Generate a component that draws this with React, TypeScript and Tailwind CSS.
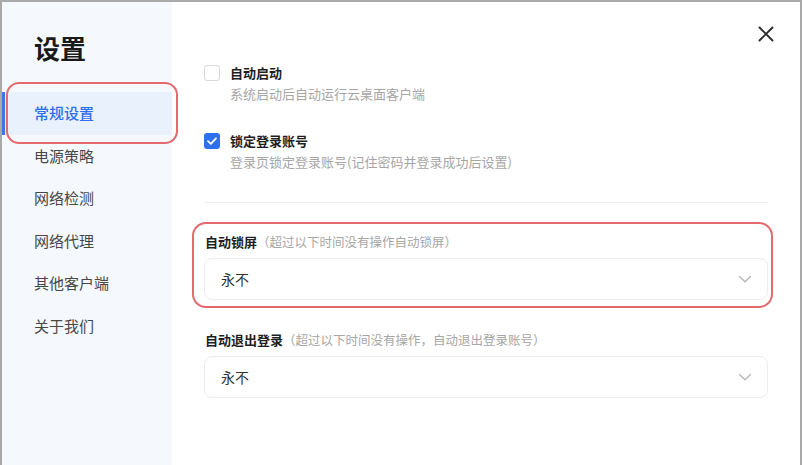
import React from "react";

const navItems = ["常规设置", "电源策略", "网络检测", "网络代理", "其他客户端", "关于我们"];

function Chevron() {
  return (
    <svg width="14" height="14" viewBox="0 0 14 14" fill="none">
      <path d="M1.5 4.5 L7 9.8 L12.5 4.5" stroke="#b5b5b5" strokeWidth="1.3" strokeLinecap="round" strokeLinejoin="round" />
    </svg>
  );
}

function Select({ value }: { value: string }) {
  return (
    <div className="mt-[6px] h-[42px] rounded-[8px] border border-[#ececec] bg-white flex items-center justify-between pl-4 pr-[15px]">
      <span className="text-[14px] leading-[20px] text-[#333333]">{value}</span>
      <Chevron />
    </div>
  );
}

function CheckRow({ checked, label, desc }: { checked: boolean; label: string; desc: string }) {
  return (
    <div className="flex gap-[10px]">
      <div className="pt-[2px]">
        {checked ? (
          <div className="w-4 h-4 rounded-[3px] bg-[#2f6fee] flex items-center justify-center">
            <svg width="10" height="8" viewBox="0 0 10 8" fill="none">
              <path d="M1 4.2 L3.8 6.8 L9 1.3" stroke="white" strokeWidth="1.8" strokeLinecap="round" strokeLinejoin="round" />
            </svg>
          </div>
        ) : (
          <div className="w-4 h-4 rounded-[3px] border border-[#d9d9d9] bg-white" />
        )}
      </div>
      <div className="flex flex-col gap-[1px]">
        <span className="text-[13px] leading-[20px] font-semibold text-[#1f1f1f]">{label}</span>
        <span className="text-[13px] leading-[20px] text-[#a6a6a6]">{desc}</span>
      </div>
    </div>
  );
}

export default function App() {
  return (
    <div className="relative flex w-[802px] h-[465px] border-x-2 border-t-2 border-[#a9a9a9] bg-white font-['Noto_Sans_CJK_SC',sans-serif] overflow-hidden">
      <aside className="w-[170px] shrink-0 bg-[#f5f9fd] flex flex-col">
        <h1 className="pl-8 pt-[28px] text-[26px] leading-[36px] font-bold text-[#1a1a1a]">设置</h1>
        <nav className="mt-[26px] flex flex-col">
          {navItems.map((item, i) => (
            <div
              key={item}
              className={
                i === 0
                  ? "relative h-[42.6px] flex items-center pl-8 bg-[#e9f1fd] text-[#2f6fee] text-[15px] font-medium"
                  : "relative h-[42.6px] flex items-center pl-8 text-[#474747] text-[15px]"
              }
            >
              {i === 0 && <span className="absolute left-0 top-0 bottom-0 w-[3px] bg-[#3a78ea]" />}
              {item}
            </div>
          ))}
        </nav>
      </aside>

      <main className="relative flex-1 flex flex-col px-8 pt-[61px]">
        <button className="absolute right-[26px] top-[24px] w-4 h-4 flex items-center justify-center">
          <svg width="16" height="16" viewBox="0 0 16 16" fill="none">
            <path d="M1.5 1.5 L14.5 14.5 M14.5 1.5 L1.5 14.5" stroke="#2a2a2a" strokeWidth="1.9" strokeLinecap="round" />
          </svg>
        </button>

        <CheckRow checked={false} label="自动启动" desc="系统启动后自动运行云桌面客户端" />
        <div className="mt-[27px]">
          <CheckRow checked={true} label="锁定登录账号" desc="登录页锁定登录账号(记住密码并登录成功后设置)" />
        </div>

        <div className="mt-[30px] h-px bg-[#ececec]" />

        <div className="relative mt-[29px]">
          <div className="pointer-events-none absolute -left-[12px] -right-[5px] -top-[10px] -bottom-[8px] rounded-[14px] border-2 border-[#e46a6e]" />
          <div className="text-[13px] leading-[20px] pl-px">
            <span className="font-semibold text-[#1f1f1f]">自动锁屏</span>
            <span className="text-[12.5px] text-[#a6a6a6]">（超过以下时间没有操作自动锁屏）</span>
          </div>
          <Select value="永不" />
        </div>

        <div className="mt-[30px]">
          <div className="text-[13px] leading-[20px] pl-px">
            <span className="font-semibold text-[#1f1f1f]">自动退出登录</span>
            <span className="text-[12.5px] text-[#a6a6a6]">（超过以下时间没有操作，自动退出登录账号）</span>
          </div>
          <Select value="永不" />
        </div>
      </main>

      <div className="pointer-events-none absolute left-[4px] top-[80px] w-[172px] h-[62px] rounded-[13px] border-2 border-[#e46a6e]" />
    </div>
  );
}
